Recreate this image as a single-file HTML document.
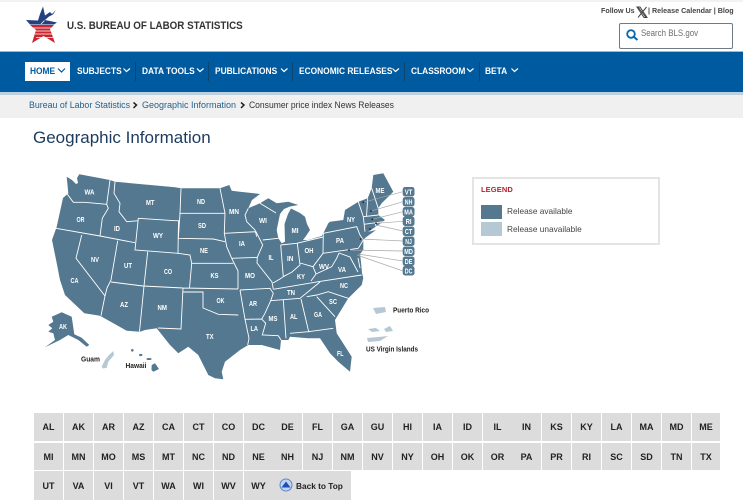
<!DOCTYPE html>
<html><head><meta charset="utf-8"><style>
*{box-sizing:border-box}
html,body{margin:0;padding:0;width:743px;height:504px;overflow:hidden;background:#fff;font-family:"Liberation Sans",sans-serif}
.a{position:absolute;white-space:nowrap;transform-origin:left center}
.n{position:absolute;top:66px;color:#fff;font-size:9px;font-weight:bold;line-height:11px;white-space:nowrap;transform:scaleX(.93);transform-origin:left center}
.s{position:absolute;top:62px;width:1px;height:19px;background:#0b4570}
.b{position:absolute;background:#dcdcdc;color:#222;font-size:9px;font-weight:bold;text-align:center;display:flex;align-items:center;justify-content:center}
svg{position:absolute;left:0;top:0}
</style></head><body>
<div class="a" style="left:0;top:0;width:743px;height:2px;background:#f2f2f2"></div>
<svg width="743" height="60">
<path d="M30 25H54L50 29L55 43L43.500 36L32 43L36 30Z" fill="#c8252f"/>
<path d="M31 28H53M35 31H51M35 34H52M36 37.500H53" stroke="#fff" stroke-width=".8"/>
<path d="M26 20L38 20.500L40 14L43 6.500L45 15.500L50 12L52 14L56 10L53 14.500L49 16.500L45 20L57 22.500L54 24.500H30Z" fill="#25407f"/>
<path d="M41 24L44.500 20.500" stroke="#fff" stroke-width=".8"/>
</svg>
<div class="a" style="left:67px;top:19px;font-size:11px;font-weight:bold;color:#333;line-height:14px;transform:scaleX(.889)">U.S. BUREAU OF LABOR STATISTICS</div>
<div class="a" style="left:601px;top:6px;font-size:7.500px;font-weight:bold;color:#444;line-height:10px;transform:scaleX(.95)">Follow Us</div>
<svg width="743" height="30"><path d="M638 7L646 17.500M646.500 7L638 17.500M637 7H640L647 17.500H644Z" stroke="#444" stroke-width="1" fill="none"/></svg>
<div class="a" style="left:648px;top:6px;font-size:7.500px;font-weight:bold;color:#444;line-height:10px;transform:scaleX(.955)">| Release Calendar | Blog</div>
<div class="a" style="left:619px;top:23px;width:114px;height:26px;border:1.500px solid #6f7a84;border-radius:2px;background:#fff"></div>
<svg width="743" height="60"><circle cx="631" cy="34" r="3.800" fill="none" stroke="#0a67ad" stroke-width="1.800"/><path d="M634 37L637.500 40" stroke="#0a67ad" stroke-width="2"/></svg>
<div class="a" style="left:641px;top:28px;font-size:9px;color:#6d6d6d;line-height:11px;transform:scaleX(.877)">Search BLS.gov</div>

<div class="a" style="left:0;top:51px;width:743px;height:1px;background:#9db9cf"></div>
<div class="a" style="left:0;top:52px;width:743px;height:40px;background:#005a9f"></div>
<div class="a" style="left:0;top:92px;width:743px;height:3px;background:#bdd0df"></div>
<div class="a" style="left:0;top:95px;width:743px;height:23px;background:#f0f0f0"></div>
<div class="a" style="left:25px;top:62px;width:45px;height:19px;background:#fff"></div>
<div class="n" style="left:30px;color:#005a9f">HOME</div>
<div class="n" style="left:77px">SUBJECTS</div>
<div class="n" style="left:142px">DATA TOOLS</div>
<div class="n" style="left:215px">PUBLICATIONS</div>
<div class="n" style="left:299px">ECONOMIC RELEASES</div>
<div class="n" style="left:411px">CLASSROOM</div>
<div class="n" style="left:485px">BETA</div>
<div class="s" style="left:135px"></div><div class="s" style="left:208px"></div><div class="s" style="left:292px"></div><div class="s" style="left:404px"></div><div class="s" style="left:479px"></div>
<svg width="743" height="100" fill="none" stroke-width="1.200">
<path d="M58 68.500L61.500 72L65 68.500" stroke="#005a9f"/>
<path d="M123.500 68.500L126.500 71.500L130 68.500M197 68.500L200 71.500L203.500 68.500M281 68.500L284 71.500L287.500 68.500M392.500 68.500L395.500 71.500L399 68.500M467 68.500L470 71.500L473.500 68.500M511.500 68.500L514.500 71.500L518 68.500" stroke="#fff"/>
</svg>
<div class="a" style="left:29px;top:100px;font-size:9px;line-height:11px;color:#1f5f8b;transform:scaleX(.98)">Bureau of Labor Statistics</div>
<div class="a" style="left:142px;top:100px;font-size:9px;line-height:11px;color:#1f5f8b">Geographic Information</div>
<div class="a" style="left:249px;top:100px;font-size:9px;line-height:11px;color:#333;transform:scaleX(.95)">Consumer price index News Releases</div>
<svg width="743" height="120" fill="none"><path d="M133.500 102.500L136.500 105L133.500 108M241 102.500L244 105L241 108" stroke="#222" stroke-width="1.500"/></svg>
<div class="a" style="left:33px;top:127px;font-size:17px;line-height:22px;color:#1d3a5f">Geographic Information</div>

<svg width="743" height="504" style="font-family:'Liberation Sans',sans-serif">
<g fill="#54788f">
<path d="M66.700 176.700L72 180L76 184L78 183L77 178L79.300 174.300L110 180L115 181.700L175 187.300L181 188.300L220 188.300L229.300 185L231.700 190.700L240 191.700L260 194L252 200L248.300 208.300L260 203.300L268.300 198.300L276.700 203.300L288.300 201.700L298.300 205L290 206.500L284 209L280 214L276.700 230L278.300 238.300L281.700 243.300L285 241.700L284.500 224L288 214L291 208.500L300 213L305 216.700L307 224L310 230L306 236L303 240L308 240L321.700 236L323.300 233.300L328.300 223.300L330 221.700L343.300 220L345 210L358.300 201.700L367.700 198.300L371.700 188.300L373.300 175L383.300 173.300L393.300 191.700L381.700 203.300L378.300 208.300L378.300 215L385 220L378.300 225L368.300 231.700L376 230L365 238L363.300 240L363.300 250L360 254L361 262L362 273L363.300 278L361.700 285L348.300 298.300L335 320L336.700 333.300L351.700 356.700L350 371.700L338.300 361.700L330 353.300L320 338.300L308 338.300L290 336.700L288.300 340L281 340L280 350L261.700 345L248.300 345L240 350L225 361.700L221.700 371.700L223.300 379.300L215 378.300L208.300 375L198.300 355L188.300 346.700L178.300 353.300L170 345L156.700 328.300L145 330L140 331.700L126.700 330.700L100 315.700L84.300 313.300L65 295L60 280L56.700 263L52 240L56.700 226.700L63 198L68.300 193.300Z"/>
<path d="M51.700 316.700L61.700 312.300L71.700 316.700L74.300 334.300L81.700 337.700L89.300 345L86.700 346.700L78.300 340L68.300 335L60 340L45 347.300L55 340L53.300 333.300L48.300 331.700L52.300 328.300L48.300 325L53.300 321.700Z"/>
<circle cx="132.300" cy="350.300" r="1.300"/><ellipse cx="140.700" cy="355" rx="1.700" ry="1.100"/><ellipse cx="149" cy="359" rx="2.600" ry="1"/>
<path d="M151.700 365L155 363.300L159 369L153.300 371.700L151.500 370Z"/>
</g>
<g fill="#b5c8d3">
<path d="M101.700 366.700L105 360L109 355L113.300 351L114 355L108.300 361.700L106.700 367.700L103 368.500Z"/>
<path d="M373 308L385 307L386 312L381 313L376 314Z"/>
<path d="M368 329L376 328L380 331L372 332ZM384 329L390 326L393 331L386 332Z"/>
<path d="M367 338L378 337L388 336L380 341L368 342Z"/>
</g>
<g fill="none" stroke="#fff" stroke-width=".9">
<path d="M66.700 193.300L73.300 202.300L85 202.300L106.700 204.300M110 180L106.700 204.300L108.300 208.300L102.300 218.300L100 236M56 228.300L100 236L135 242.700M115 181.700L114 193.300L120 203.300L119 211.700L126.700 221.700L138.300 220.700M138.300 218.300L175 220.700L178.500 220.700L178 253.300L135 250ZM81.700 235L76 258.300L105 296L101 315.700M117.700 240.700L111 280L107 288L105 296M147.700 251.700L144 286L139.500 331.500M111 282L143 286L183 288L238 289M183 288L181 329L158 328M183 292L203 292L203 308L218.300 314.300L238.300 315"/>
<path d="M181 188.300L180 213.300L178.300 238.300M180 213.300L225 213.300M220 188.300L225 213.300L224.300 233.300L226.700 246.700L231.700 258.300L238 271L238 289M178.300 238.300L213.300 239L225 241.700M178 253.300L190 255L191.700 263.300L189.500 288M191.700 263.300L233.300 263.300M224.300 233.300L256 231.700L262.700 245L257.300 257.300L231.700 258.300M248.300 208.300L245 215L246.700 221.700L255 230L256.700 236.700M262.700 240L278.300 238.300M257.300 257.300L257 263L272 282L273.300 289M260 203.300L276 213"/>
<path d="M240 290L270 288.300L273.300 293.300L270.700 300.700L265 313.300L261.700 319L265.700 323.300L262.300 335L278.300 335.700L281 340M240 290L245 319.300L261.700 319M245 319.300L249 338.300L247.700 345M273.300 289.300L318.300 281.700L361.700 275M270.700 300.700L300 298.300L320 282M306.700 296.700L316.700 295L328.300 291.700L348.300 298.300M316.700 296.700L335 316.700M283.300 300L286 338.300M301 299L308.300 330L309 332.300M290 333.300L308.300 331.700L333.300 328.300"/>
<path d="M280.700 245L296.700 243.300L323 237M280.700 245L283.300 276.700L280 279L273 283M297.300 243.300L300 265L292 272L283.300 276.700M300 263L313 266.700L323 253.300L323.300 233.300M313 266.700L316 274L311 281M316 274L331.700 266.700L336.700 258.300L339 253M323 253.300L358.300 248.300M323.300 233.300L356.700 226.700L360 235L363.300 240L358.300 248.300M339 253L350 257L358 272M358.300 201.700L363.300 216.700L365 231.700M367.700 198.300L366.500 216.500M371.700 188.300L378.300 208.300M363.300 216.700L378.300 215M364 224.300L383 221.700M375 223L376.700 228.500M358 258L360 268"/>
</g>
<g fill="none" stroke="#a8a8a8" stroke-width=".7">
<path d="M403 191.700L363.300 202.300M403 201.700L371 211M403 211.700L372.300 219.300M403 221.300L376 223.300M403 231L376 225M403 241L360.700 239M403 251L349 250M403 261L358.300 254M403 271L357 255"/>
</g>
<g fill="#222"><circle cx="363.300" cy="202.300" r=".9"/><circle cx="371" cy="211" r=".9"/><circle cx="372.300" cy="219.300" r=".9"/><circle cx="376" cy="223.300" r=".9"/><circle cx="370" cy="229" r=".9"/><circle cx="360.700" cy="239" r=".9"/><circle cx="349" cy="250" r=".9"/></g>
<g fill="#54788f"><rect x="402.700" y="187" width="11.800" height="9.500" rx="2.500"/><rect x="402.700" y="197" width="11.800" height="9.500" rx="2.500"/><rect x="402.700" y="207" width="11.800" height="9.500" rx="2.500"/><rect x="402.700" y="216.500" width="11.800" height="9.500" rx="2.500"/><rect x="402.700" y="226.500" width="11.800" height="9.500" rx="2.500"/><rect x="402.700" y="236.500" width="11.800" height="9.500" rx="2.500"/><rect x="402.700" y="246.500" width="11.800" height="9.500" rx="2.500"/><rect x="402.700" y="256.500" width="11.800" height="9.500" rx="2.500"/><rect x="402.700" y="266" width="11.800" height="9.500" rx="2.500"/></g>
<g fill="#fff" font-size="7.500" font-weight="bold" lengthAdjust="spacingAndGlyphs">
<text x="84.500" y="194.500" textLength="10" lengthAdjust="spacingAndGlyphs">WA</text><text x="76.500" y="222" textLength="8" lengthAdjust="spacingAndGlyphs">OR</text><text x="114" y="231" textLength="6" lengthAdjust="spacingAndGlyphs">ID</text><text x="146" y="205" textLength="8.500" lengthAdjust="spacingAndGlyphs">MT</text><text x="197" y="204" textLength="8" lengthAdjust="spacingAndGlyphs">ND</text><text x="198" y="228" textLength="8" lengthAdjust="spacingAndGlyphs">SD</text><text x="153" y="238" textLength="10" lengthAdjust="spacingAndGlyphs">WY</text><text x="200" y="253" textLength="8" lengthAdjust="spacingAndGlyphs">NE</text><text x="91" y="262" textLength="8" lengthAdjust="spacingAndGlyphs">NV</text><text x="124" y="268" textLength="8" lengthAdjust="spacingAndGlyphs">UT</text><text x="164" y="274" textLength="8" lengthAdjust="spacingAndGlyphs">CO</text><text x="210.500" y="278" textLength="8" lengthAdjust="spacingAndGlyphs">KS</text><text x="70.500" y="283" textLength="8" lengthAdjust="spacingAndGlyphs">CA</text><text x="120" y="307" textLength="8" lengthAdjust="spacingAndGlyphs">AZ</text><text x="157.500" y="310" textLength="9.500" lengthAdjust="spacingAndGlyphs">NM</text><text x="216.500" y="303" textLength="8" lengthAdjust="spacingAndGlyphs">OK</text><text x="206" y="339" textLength="7.500" lengthAdjust="spacingAndGlyphs">TX</text><text x="59" y="329" textLength="8" lengthAdjust="spacingAndGlyphs">AK</text>
<text x="229" y="214" textLength="10" lengthAdjust="spacingAndGlyphs">MN</text><text x="259" y="223" textLength="8" lengthAdjust="spacingAndGlyphs">WI</text><text x="291.500" y="233" textLength="7" lengthAdjust="spacingAndGlyphs">MI</text><text x="239" y="246" textLength="6" lengthAdjust="spacingAndGlyphs">IA</text><text x="268.500" y="260" textLength="5" lengthAdjust="spacingAndGlyphs">IL</text><text x="287" y="261" textLength="6.500" lengthAdjust="spacingAndGlyphs">IN</text><text x="304.500" y="253" textLength="9" lengthAdjust="spacingAndGlyphs">OH</text><text x="347" y="222" textLength="8" lengthAdjust="spacingAndGlyphs">NY</text><text x="336" y="243" textLength="8" lengthAdjust="spacingAndGlyphs">PA</text><text x="319" y="269" textLength="10" lengthAdjust="spacingAndGlyphs">WV</text><text x="338" y="272" textLength="8" lengthAdjust="spacingAndGlyphs">VA</text><text x="297" y="279" textLength="8" lengthAdjust="spacingAndGlyphs">KY</text><text x="245" y="278" textLength="10" lengthAdjust="spacingAndGlyphs">MO</text><text x="249" y="306" textLength="8" lengthAdjust="spacingAndGlyphs">AR</text><text x="287" y="295" textLength="8" lengthAdjust="spacingAndGlyphs">TN</text><text x="340" y="288" textLength="8" lengthAdjust="spacingAndGlyphs">NC</text><text x="329" y="304" textLength="8" lengthAdjust="spacingAndGlyphs">SC</text><text x="314" y="317" textLength="8" lengthAdjust="spacingAndGlyphs">GA</text><text x="290" y="319" textLength="7.500" lengthAdjust="spacingAndGlyphs">AL</text><text x="268.500" y="321" textLength="9" lengthAdjust="spacingAndGlyphs">MS</text><text x="250.500" y="331" textLength="7.500" lengthAdjust="spacingAndGlyphs">LA</text><text x="337" y="356" textLength="6.500" lengthAdjust="spacingAndGlyphs">FL</text><text x="375.500" y="193" textLength="9" lengthAdjust="spacingAndGlyphs">ME</text>
<g font-size="7"><text x="404.800" y="194.500" textLength="7.600" lengthAdjust="spacingAndGlyphs">VT</text><text x="404.800" y="204.500" textLength="7.600" lengthAdjust="spacingAndGlyphs">NH</text><text x="404.300" y="214.500" textLength="8.600" lengthAdjust="spacingAndGlyphs">MA</text><text x="405.600" y="224" textLength="6" lengthAdjust="spacingAndGlyphs">RI</text><text x="404.800" y="234" textLength="7.600" lengthAdjust="spacingAndGlyphs">CT</text><text x="405.300" y="244" textLength="6.600" lengthAdjust="spacingAndGlyphs">NJ</text><text x="404.300" y="254" textLength="8.600" lengthAdjust="spacingAndGlyphs">MD</text><text x="404.800" y="264" textLength="7.600" lengthAdjust="spacingAndGlyphs">DE</text><text x="404.800" y="273.500" textLength="7.600" lengthAdjust="spacingAndGlyphs">DC</text></g>
</g>
<g fill="#222" font-size="7.500" font-weight="bold">
<text x="81" y="361.500" textLength="19" lengthAdjust="spacingAndGlyphs">Guam</text><text x="125.500" y="368" textLength="21" lengthAdjust="spacingAndGlyphs">Hawaii</text><text x="393" y="312.500" textLength="36" lengthAdjust="spacingAndGlyphs">Puerto Rico</text><text x="366" y="351.500" textLength="52" lengthAdjust="spacingAndGlyphs">US Virgin Islands</text>
</g>
</svg>

<div class="a" style="left:472px;top:177px;width:188px;height:68px;border:2px solid #e4e4e4;background:#fff"></div>
<div class="a" style="left:481px;top:185px;font-size:7.500px;font-weight:bold;color:#b8202f;line-height:10px;letter-spacing:.1px">LEGEND</div>
<div class="a" style="left:481px;top:205px;width:21px;height:14px;background:#54788f"></div>
<div class="a" style="left:481px;top:222px;width:21px;height:14px;background:#b5c8d3"></div>
<div class="a" style="left:507px;top:206px;font-size:8.300px;color:#444;line-height:11px">Release available</div>
<div class="a" style="left:507px;top:224px;font-size:8.300px;color:#444;line-height:11px">Release unavailable</div>

<div class="b" style="left:34px;top:413px;width:29px;height:28px">AL</div>
<div class="b" style="left:64px;top:413px;width:29px;height:28px">AK</div>
<div class="b" style="left:94px;top:413px;width:29px;height:28px">AR</div>
<div class="b" style="left:124px;top:413px;width:29px;height:28px">AZ</div>
<div class="b" style="left:154px;top:413px;width:29px;height:28px">CA</div>
<div class="b" style="left:184px;top:413px;width:29px;height:28px">CT</div>
<div class="b" style="left:214px;top:413px;width:29px;height:28px">CO</div>
<div class="b" style="left:244px;top:413px;width:29px;height:28px">DC</div>
<div class="b" style="left:273px;top:413px;width:29px;height:28px">DE</div>
<div class="b" style="left:303px;top:413px;width:29px;height:28px">FL</div>
<div class="b" style="left:333px;top:413px;width:29px;height:28px">GA</div>
<div class="b" style="left:363px;top:413px;width:29px;height:28px">GU</div>
<div class="b" style="left:393px;top:413px;width:29px;height:28px">HI</div>
<div class="b" style="left:423px;top:413px;width:29px;height:28px">IA</div>
<div class="b" style="left:453px;top:413px;width:29px;height:28px">ID</div>
<div class="b" style="left:483px;top:413px;width:29px;height:28px">IL</div>
<div class="b" style="left:512px;top:413px;width:29px;height:28px">IN</div>
<div class="b" style="left:542px;top:413px;width:29px;height:28px">KS</div>
<div class="b" style="left:572px;top:413px;width:29px;height:28px">KY</div>
<div class="b" style="left:602px;top:413px;width:29px;height:28px">LA</div>
<div class="b" style="left:632px;top:413px;width:29px;height:28px">MA</div>
<div class="b" style="left:662px;top:413px;width:29px;height:28px">MD</div>
<div class="b" style="left:692px;top:413px;width:28px;height:28px">ME</div>
<div class="b" style="left:34px;top:443px;width:29px;height:27px">MI</div>
<div class="b" style="left:64px;top:443px;width:29px;height:27px">MN</div>
<div class="b" style="left:94px;top:443px;width:29px;height:27px">MO</div>
<div class="b" style="left:124px;top:443px;width:29px;height:27px">MS</div>
<div class="b" style="left:154px;top:443px;width:29px;height:27px">MT</div>
<div class="b" style="left:184px;top:443px;width:29px;height:27px">NC</div>
<div class="b" style="left:214px;top:443px;width:29px;height:27px">ND</div>
<div class="b" style="left:244px;top:443px;width:29px;height:27px">NE</div>
<div class="b" style="left:273px;top:443px;width:29px;height:27px">NH</div>
<div class="b" style="left:303px;top:443px;width:29px;height:27px">NJ</div>
<div class="b" style="left:333px;top:443px;width:29px;height:27px">NM</div>
<div class="b" style="left:363px;top:443px;width:29px;height:27px">NV</div>
<div class="b" style="left:393px;top:443px;width:29px;height:27px">NY</div>
<div class="b" style="left:423px;top:443px;width:29px;height:27px">OH</div>
<div class="b" style="left:453px;top:443px;width:29px;height:27px">OK</div>
<div class="b" style="left:483px;top:443px;width:29px;height:27px">OR</div>
<div class="b" style="left:512px;top:443px;width:29px;height:27px">PA</div>
<div class="b" style="left:542px;top:443px;width:29px;height:27px">PR</div>
<div class="b" style="left:572px;top:443px;width:29px;height:27px">RI</div>
<div class="b" style="left:602px;top:443px;width:29px;height:27px">SC</div>
<div class="b" style="left:632px;top:443px;width:29px;height:27px">SD</div>
<div class="b" style="left:662px;top:443px;width:29px;height:27px">TN</div>
<div class="b" style="left:692px;top:443px;width:28px;height:27px">TX</div>
<div class="b" style="left:34px;top:471px;width:29px;height:29px">UT</div>
<div class="b" style="left:64px;top:471px;width:29px;height:29px">VA</div>
<div class="b" style="left:94px;top:471px;width:29px;height:29px">VI</div>
<div class="b" style="left:124px;top:471px;width:29px;height:29px">VT</div>
<div class="b" style="left:154px;top:471px;width:29px;height:29px">WA</div>
<div class="b" style="left:184px;top:471px;width:29px;height:29px">WI</div>
<div class="b" style="left:214px;top:471px;width:29px;height:29px">WV</div>
<div class="b" style="left:244px;top:471px;width:29px;height:29px">WY</div>
<div class="b" style="left:273px;top:471px;width:78px;height:29px;justify-content:flex-start;padding-left:23px;font-size:8.300px">Back to Top</div>
<svg width="743" height="504"><circle cx="286" cy="485" r="6" fill="#c4d4ec" stroke="#5c86cc" stroke-width="1"/><path d="M281.500 487.500L286 481.500L290.500 487.500Z" fill="#1f4fb5"/></svg>
</body></html>
